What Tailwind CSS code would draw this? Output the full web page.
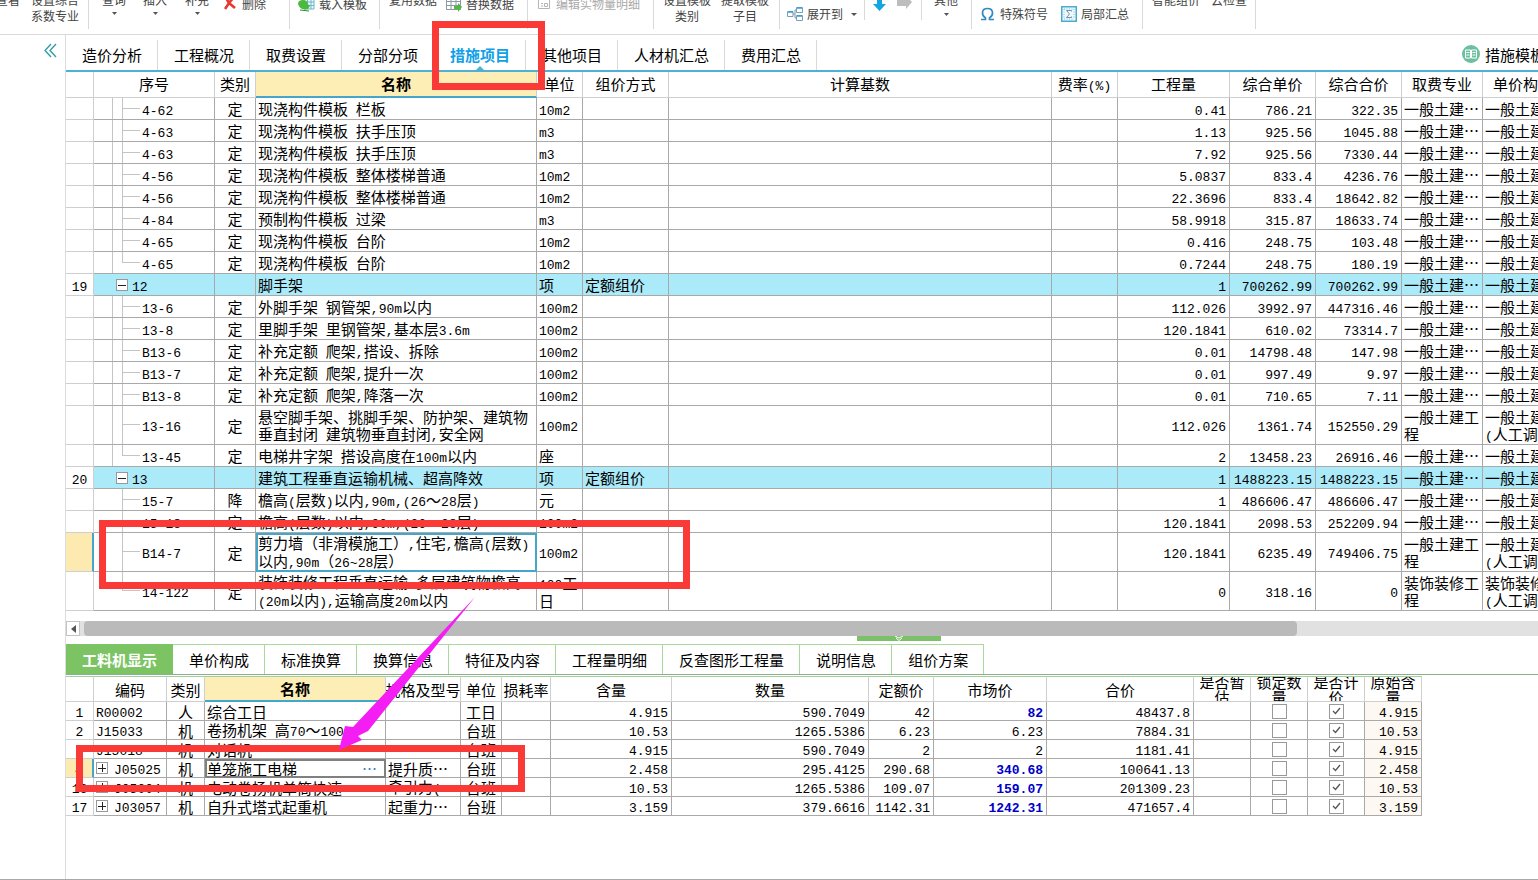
<!DOCTYPE html>
<html lang="zh-CN">
<head>
<meta charset="utf-8">
<title>措施项目</title>
<script src="https://cdn.jsdelivr.net/npm/@tailwindcss/browser@4"></script>
</head>
<body class="relative h-screen overflow-hidden bg-white font-['Noto_Sans_CJK_SC',sans-serif] text-[15px] leading-[17px] text-black">
<div class="flex h-full flex-col border-b border-[#a8a8a8]">

  <!-- Ribbon, scrolled half out of view -->
  <header class="flex h-[35px] flex-none items-start overflow-hidden border-b border-[#d9d9d9] text-xs leading-4 text-[#444] whitespace-nowrap">
    <div class="flex h-[29px] w-[89px] flex-none items-start border-r border-[#d9d9d9]">
      <button class="-mt-2 -ml-1 flex-none">查看</button>
      <button class="-mt-2 ml-[11px] flex-none text-center">设置综合<br>系数专业</button>
    </div>
    <div class="flex h-[29px] w-[201px] flex-none items-start border-r border-[#d9d9d9]">
      <button class="-mt-2 ml-[13px] flex w-6 flex-none flex-col items-center gap-1">查询<svg width="5" height="3"><path d="M0 0h5L2.500 3z" fill="#555"/></svg></button>
      <button class="-mt-2 ml-[17px] flex w-6 flex-none flex-col items-center gap-1">插入<svg width="5" height="3"><path d="M0 0h5L2.500 3z" fill="#555"/></svg></button>
      <button class="-mt-2 ml-[18px] flex w-6 flex-none flex-col items-center gap-1">补充<svg width="5" height="3"><path d="M0 0h5L2.500 3z" fill="#555"/></svg></button>
      <button class="-mt-1 ml-[15px] flex flex-none items-center gap-1.5"><svg width="12" height="14" viewBox="0 0 12 14"><path d="M2 1L5 6L1 12M10 0L5 6L11 11" fill="none" stroke="#e8382d" stroke-width="2.600" stroke-linejoin="round"/></svg>删除</button>
    </div>
    <div class="flex h-[29px] w-[90px] flex-none items-start border-r border-[#d9d9d9]">
      <button class="-mt-1 ml-2 flex flex-none items-center gap-1"><svg width="17" height="16" viewBox="0 0 17 16"><path d="M6 2h10v11H6zM6 6h10M6 9.500h10M9.500 2v11M13 2v11" fill="#eef8fb" stroke="#6db5cf"/><path d="M0 8q0-4 5-4 4 0 5 4l2 2-2 3q-8 2-10-5z" fill="#4cba3e"/><path d="M2 14l9 1" stroke="#2f8f2c"/></svg>载入模板</button>
    </div>
    <div class="flex h-[29px] w-[148px] flex-none items-start border-r border-[#d9d9d9]">
      <button class="-mt-2 ml-[9px] flex-none">复用数据</button>
      <button class="-mt-1 ml-[9px] flex flex-none items-center gap-1"><svg width="16" height="16" viewBox="0 0 16 16"><path d="M.5 1.500h14v12H.5zM.5 5.500h14M.5 9.500h14M5 1.500v12M10 1.500v12" fill="#fff" stroke="#8a9aa5"/><path d="M8 10h4V7l4 4-4 5v-3H8z" fill="#4cba3e"/></svg>替换数据</button>
    </div>
    <div class="flex h-[29px] w-[126px] flex-none items-start border-r border-[#d9d9d9] text-[#a9a9a9]">
      <button class="-mt-1 ml-[10px] flex flex-none items-center gap-1.5"><svg width="12" height="12" viewBox="0 0 12 12" fill="none" stroke="#b5b5b5"><path d="M.5 2v8.500h11V1.500H3M3 5.500h2M3 8h2M6.500 8.500v-3h3v3z"/></svg>编辑实物量明细</button>
    </div>
    <div class="flex h-[29px] w-[126px] flex-none items-start border-r border-[#d9d9d9]">
      <button class="-mt-2 ml-[9px] flex-none text-center">设置模板<br>类别</button>
      <button class="-mt-2 ml-[10px] flex-none text-center">提取模板<br>子目</button>
    </div>
    <div class="flex h-5 w-[85px] flex-none items-start border-r border-[#d9d9d9]">
      <button class="mt-1.5 ml-[7px] flex flex-none items-center gap-1"><svg width="16" height="16" viewBox="0 0 16 16" fill="#fff" stroke="#7d9db0"><path d="M6 8h2M8 4v8M8 4h2M8 12h2" fill="none"/><path d="M.5 5.500h5.500v5H.5zM9.500 1.500h6v5h-6zM9.500 9.500h6v5h-6z"/><path d="M1 6h5M10 2h5M10 10h5" stroke="#2fa4d5" stroke-width="1.500"/></svg>展开到<svg class="ml-1" width="6" height="3"><path d="M0 0h6L3 3z" fill="#555"/></svg></button>
    </div>
    <div class="flex h-5 w-[57px] flex-none items-start border-r border-[#d9d9d9]">
      <button aria-label="下移" class="ml-[8px] flex-none"><svg width="13" height="11" viewBox="0 0 13 11"><path d="M4 0h5v4h4L6.500 11 0 4h4z" fill="#12a5e4"/></svg></button>
      <button aria-label="右移" class="ml-[11px] flex-none"><svg width="15" height="10" viewBox="0 0 15 10"><path d="M0 0h9v-4l6 6-6 7V6H0z" fill="#bdbdbd"/></svg></button>
    </div>
    <div class="flex h-[29px] w-[50px] flex-none items-start border-r border-[#d9d9d9]">
      <button class="-mt-2 ml-[12px] flex w-6 flex-none flex-col items-center gap-[5px]">其他<svg width="5" height="3"><path d="M0 0h5L2.500 3z" fill="#555"/></svg></button>
    </div>
    <div class="flex h-[29px] w-[171px] flex-none items-start border-r border-[#d9d9d9]">
      <button class="mt-1.5 ml-[9px] flex flex-none items-center gap-1.5"><svg width="13" height="14" viewBox="0 0 13 14"><path d="M0 12.500h4.500V11Q1.500 9 1.500 6Q1.500 1.500 6.500 1.500T11.500 6Q11.500 9 8.500 11V12.500H13" fill="none" stroke="#3389bd" stroke-width="1.700"/></svg>特殊符号</button>
      <button class="mt-1.5 ml-[13px] flex flex-none items-center gap-1"><svg width="16" height="16" viewBox="0 0 16 16"><path d="M.75.75h14.500v14.500H.75z" fill="#eef9fc" stroke="#4aa9cf" stroke-width="1.500"/><path d="M3 3h10M3 13h10M3 3v10M13 3v10" stroke="#79c3de" stroke-dasharray="1 1.500"/><path d="M10.500 5.500V4.500H5.500L8.500 8 5.500 11.500h5v-1" fill="none" stroke="#7a8fa0"/></svg>局部汇总</button>
    </div>
    <div class="flex h-[29px] w-[113px] flex-none items-start border-r border-[#d9d9d9]">
      <button class="-mt-2 ml-[9px] flex-none">智能组价</button>
      <button class="-mt-2 ml-[11px] flex-none">云检查</button>
    </div>
  </header>

  <div class="flex min-h-0 flex-1">
    <aside class="flex w-[66px] flex-none justify-end border-r border-[#dcdcdc] pr-2 pt-2">
      <button aria-label="收起" class="self-start"><svg width="13" height="15" viewBox="0 0 13 15" fill="none" stroke="#2b9ba6" stroke-width="1.300"><path d="M7 1L1 7.500 7 14M12 1L6 7.500 12 14"/></svg></button>
    </aside>

    <main class="flex min-w-0 flex-1 flex-col">
      <nav class="flex h-[37px] flex-none items-stretch overflow-hidden border-b-2 border-[#4fb0d6] pt-[5px] whitespace-nowrap">
        <button class="flex-none border-r border-[#d9d9d9] pr-[15px] pb-0.5 pl-4">造价分析</button>
        <button class="flex-none border-r border-[#d9d9d9] pr-[15px] pb-0.5 pl-4">工程概况</button>
        <button class="flex-none border-r border-[#d9d9d9] pr-[15px] pb-0.5 pl-4">取费设置</button>
        <button class="flex-none border-r border-[#d9d9d9] pr-[15px] pb-0.5 pl-4">分部分项</button>
        <button class="relative flex-none border-r border-[#d9d9d9] pr-[15px] pb-0.5 pl-4 font-bold text-[#12a0e6]">措施项目<svg class="absolute bottom-0 left-[42px]" width="8" height="4"><path d="M0 4L4 0l4 4z" fill="#4fb0d6"/></svg></button>
        <button class="flex-none border-r border-[#d9d9d9] pr-[15px] pb-0.5 pl-4">其他项目</button>
        <button class="flex-none border-r border-[#d9d9d9] pr-[15px] pb-0.5 pl-4">人材机汇总</button>
        <button class="flex-none border-r border-[#d9d9d9] pr-[15px] pb-0.5 pl-4">费用汇总</button>
        <span class="min-w-0 flex-1"></span>
        <button class="flex w-[76px] flex-none items-center gap-[5px] overflow-hidden pb-0.5"><svg class="flex-none" width="18" height="18" viewBox="0 0 18 18"><circle cx="9" cy="9" r="9" fill="#6cc0a0"/><path d="M3.500 5h5v8h-5zM9.500 5h5v8h-5zM4.500 7.500h3M4.500 10h3M10.500 7.500h3M10.500 10h3" fill="none" stroke="#fff"/></svg>措施模板</button>
      </nav>

      <div class="flex-none overflow-hidden">
        <table class="w-[1527px] table-fixed border-separate border-spacing-0 whitespace-nowrap">
          <colgroup><col class="w-[28px]"><col class="w-[121px]"><col class="w-[41px]"><col class="w-[281px]"><col class="w-[46px]"><col class="w-[86px]"><col class="w-[383px]"><col class="w-[66px]"><col class="w-[112px]"><col class="w-[86px]"><col class="w-[86px]"><col class="w-[81px]"><col class="w-[110px]"></colgroup>
          <thead><tr id="mainHead"></tr></thead>
          <tbody id="mainBody"></tbody>
        </table>
      </div>

      <!-- Horizontal scrollbar -->
      <div class="mt-2.5 flex h-[15px] flex-none items-stretch bg-[#e1e1e1]">
        <button aria-label="向左滚动" class="grid w-[14px] place-items-center border border-[#c4c4c4] bg-white"><svg width="5" height="8"><path d="M5 0v8L0 4z" fill="#555"/></svg></button>
        <div class="ml-1 w-[1213px] rounded-sm bg-[#bababa]"></div>
      </div>
      <div class="flex h-2 flex-none pl-[791px]">
        <button aria-label="折叠" class="grid h-[5px] w-[84px] place-items-center bg-[#7cc06a]"><svg width="8" height="5" fill="none" stroke="#fff"><path d="M0 0l4 2 4-2M1 2l3 2.500L7 2"/></svg></button>
      </div>

      <nav class="flex h-[31px] flex-none items-stretch border-b border-[#86b583] whitespace-nowrap">
        <button class="flex-none bg-[#7cc363] px-4 font-bold text-white">工料机显示</button>
        <button class="flex-none border-t border-r border-[#a9d99b] pr-[15px] pl-4">单价构成</button>
        <button class="flex-none border-t border-r border-[#a9d99b] pr-[15px] pl-4">标准换算</button>
        <button class="flex-none border-t border-r border-[#a9d99b] pr-[15px] pl-4">换算信息</button>
        <button class="flex-none border-t border-r border-[#a9d99b] pr-[15px] pl-4">特征及内容</button>
        <button class="flex-none border-t border-r border-[#a9d99b] pr-[15px] pl-4">工程量明细</button>
        <button class="flex-none border-t border-r border-[#a9d99b] pr-[15px] pl-4">反查图形工程量</button>
        <button class="flex-none border-t border-r border-[#a9d99b] pr-[15px] pl-4">说明信息</button>
        <button class="flex-none border-t border-r border-[#a9d99b] pr-[15px] pl-4">组价方案</button>
      </nav>

      <div class="min-h-0 flex-1 overflow-hidden pt-px">
        <table class="w-[1356px] table-fixed border-separate border-spacing-0 whitespace-nowrap">
          <colgroup><col class="w-[28px]"><col class="w-[73px]"><col class="w-[38px]"><col class="w-[181px]"><col class="w-[75px]"><col class="w-[41px]"><col class="w-[49px]"><col class="w-[121px]"><col class="w-[197px]"><col class="w-[65px]"><col class="w-[113px]"><col class="w-[147px]"><col class="w-[57px]"><col class="w-[57px]"><col class="w-[57px]"><col class="w-[57px]"></colgroup>
          <thead><tr id="subHead"></tr></thead>
          <tbody id="subBody"></tbody>
        </table>
      </div>
    </main>
  </div>
</div>

<!-- Annotations -->
<div class="pointer-events-none absolute top-[21px] left-[432px] h-[69px] w-[113px] border-[7px] border-[#f93a37]"></div>
<div class="pointer-events-none absolute top-[520px] left-[99px] h-[69px] w-[591px] border-[7px] border-[#f93a37]"></div>
<div class="pointer-events-none absolute top-[745px] left-[76px] h-[47px] w-[449px] border-[7px] border-[#f93a37]"></div>
<svg class="pointer-events-none absolute top-[595px] left-[335px]" width="145" height="158" viewBox="335 595 145 158"><path d="M475 597L353 727L345 726L339 750L362 740L358 736L368 731Z" fill="#f41df4"/></svg>

<script>
// Latin runs use a half-width monospace beside the full-width characters
const t = s => s.split('<br>').map(l => l.replace(/[ -~]+/g, m => `<span class="font-['Liberation_Mono',monospace] text-[13px] leading-none whitespace-pre">${m}</span>`)).join('<br>');
const L = 'border-r border-b border-[#a9a9a9] p-0 pl-0.5 text-left font-normal';
const C = 'border-r border-b border-[#a9a9a9] p-0 text-center font-normal';
const R = 'border-r border-b border-[#a9a9a9] p-0 pr-[3px] text-right font-normal';
const G = 'border-r border-b border-[#cfcfcf] p-0 text-center';

document.getElementById('mainHead').innerHTML =
  ['', '序号', '类别', '名称', '单位', '组价方式', '计算基数', '费率(%)', '工程量', '综合单价', '综合合价', '取费专业', '单价构成文件'].map((h, i) =>
    i === 3 ? `<th class="h-[26px] border-r border-b-2 border-r-[#cfcfcf] border-b-[#45a5cb] bg-[#fdeeb5] p-0 pb-px font-bold">${h}</th>`
            : `<th class="h-[26px] overflow-hidden border-r border-b border-[#cfcfcf] p-0 pb-0.5 font-normal ${i === 12 ? 'pl-2.5 text-left' : ''}">${t(h)}</th>`).join('');

const Y = '一般土建⋯', Y2 = '一般土建工<br>程', Y3 = '一般土建工程<br>(人工调整)';
// no, code, type, name, unit, pricing, qty, price, total, specialty, file, flags
const rows = [
  ['', '4-62', '定', '现浇构件模板 栏板', '10m2', '', '0.41', '786.21', '322.35', Y, Y, 'a'],
  ['', '4-63', '定', '现浇构件模板 扶手压顶', 'm3', '', '1.13', '925.56', '1045.88', Y, Y, 'a'],
  ['', '4-63', '定', '现浇构件模板 扶手压顶', 'm3', '', '7.92', '925.56', '7330.44', Y, Y, 'a'],
  ['', '4-56', '定', '现浇构件模板 整体楼梯普通', '10m2', '', '5.0837', '833.4', '4236.76', Y, Y, 'a'],
  ['', '4-56', '定', '现浇构件模板 整体楼梯普通', '10m2', '', '22.3696', '833.4', '18642.82', Y, Y, 'a'],
  ['', '4-84', '定', '预制构件模板 过梁', 'm3', '', '58.9918', '315.87', '18633.74', Y, Y, 'a'],
  ['', '4-65', '定', '现浇构件模板 台阶', '10m2', '', '0.416', '248.75', '103.48', Y, Y, 'a'],
  ['', '4-65', '定', '现浇构件模板 台阶', '10m2', '', '0.7244', '248.75', '180.19', Y, Y, 'ae'],
  ['19', '12', '', '脚手架', '项', '定额组价', '1', '700262.99', '700262.99', Y, Y, 'g'],
  ['', '13-6', '定', '外脚手架 钢管架,90m以内', '100m2', '', '112.026', '3992.97', '447316.46', Y, Y, 'a'],
  ['', '13-8', '定', '里脚手架 里钢管架,基本层3.6m', '100m2', '', '120.1841', '610.02', '73314.7', Y, Y, 'a'],
  ['', 'B13-6', '定', '补充定额 爬架,搭设、拆除', '100m2', '', '0.01', '14798.48', '147.98', Y, Y, 'a'],
  ['', 'B13-7', '定', '补充定额 爬架,提升一次', '100m2', '', '0.01', '997.49', '9.97', Y, Y, 'a'],
  ['', 'B13-8', '定', '补充定额 爬架,降落一次', '100m2', '', '0.01', '710.65', '7.11', Y, Y, 'a'],
  ['', '13-16', '定', '悬空脚手架、挑脚手架、防护架、建筑物<br>垂直封闭 建筑物垂直封闭,安全网', '100m2', '', '112.026', '1361.74', '152550.29', Y2, Y3, 'at'],
  ['', '13-45', '定', '电梯井字架 搭设高度在100m以内', '座', '', '2', '13458.23', '26916.46', Y, Y, 'ae'],
  ['20', '13', '', '建筑工程垂直运输机械、超高降效', '项', '定额组价', '1', '1488223.15', '1488223.15', Y, Y, 'g'],
  ['', '15-7', '降', '檐高(层数)以内,90m,(26～28层)', '元', '', '1', '486606.47', '486606.47', Y, Y, ''],
  ['', '15-18', '定', '檐高(层数)以内,90m,(26～28层)', '100m2', '', '120.1841', '2098.53', '252209.94', Y, Y, ''],
  ['', 'B14-7', '定', '剪力墙（非滑模施工）,住宅,檐高(层数)<br>以内,90m（26~28层）', '100m2', '', '120.1841', '6235.49', '749406.75', Y2, Y3, 'ts'],
  ['', '14-122', '定', '装饰装修工程垂直运输 多层建筑物檐高<br>(20m以内),运输高度20m以内', '100工<br>日', '', '0', '318.16', '0', '装饰装修工<br>程', '装饰装修工程<br>(人工调整)', 'te'],
];
document.getElementById('mainBody').innerHTML = rows.map(r => {
  const f = r[11], tall = f.includes('t'), sel = f.includes('s');
  const tree = f.includes('g')
    ? `<div class="flex h-[21px] items-center pl-[22px]"><button aria-label="收起" class="mr-1 grid h-3 w-3 flex-none place-items-center border border-[#999] bg-white"><svg width="8" height="8" stroke="#222"><path d="M0 4.500h8"/></svg></button><span>${t(r[1])}</span></div>`
    : `<div class="flex items-center ${tall ? 'h-[38px]' : 'h-[21px]'}"><span class="w-[19px] flex-none self-stretch border-r ${f.includes('a') ? 'border-[#c4c4c4]' : 'border-transparent'}"></span><span class="w-[9px] flex-none"></span><span class="flex w-[18px] flex-none flex-col self-stretch"><span class="border-b border-l border-[#c4c4c4] ${tall ? 'h-[19px]' : 'h-[11px]'}"></span>${f.includes('e') ? '' : '<span class="flex-1 border-l border-[#c4c4c4]"></span>'}</span><span class="pl-0.5">${t(r[1])}</span></div>`;
  return `<tr class="${tall ? 'h-[39px]' : 'h-[22px]'} ${f.includes('g') ? 'bg-[#aaeaf9]' : ''}">
    <td class="${sel ? 'border-r-2 border-b border-r-[#45a5cb] border-b-[#cfcfcf] bg-[#fdeab0] p-0' : G + ' bg-white'}">${t(r[0])}</td>
    <td class="${L.replace('pl-0.5', 'pl-0')}">${tree}</td><td class="${C}">${r[2]}</td>
    <td class="${sel ? L + ' outline-2 -outline-offset-2 outline-[#45a5cb]' : L}">${t(r[3])}</td><td class="${L}">${t(r[4])}</td><td class="${L}">${r[5]}</td>
    <td class="${L}"></td><td class="${L}"></td><td class="${R}">${t(r[6])}</td><td class="${R}">${t(r[7])}</td><td class="${R}">${t(r[8])}</td><td class="${L}">${t(r[9])}</td><td class="${L}">${t(r[10])}</td></tr>`;
}).join('');

document.getElementById('subHead').innerHTML =
  ['', '编码', '类别', '名称', '规格及型号', '单位', '损耗率', '含量', '数量', '定额价', '市场价', '合价', '是否暂<br>估', '锁定数<br>量', '是否计<br>价', '原始含<br>量'].map((h, i) =>
    i === 3 ? `<th class="h-[26px] border-t border-r border-b-2 border-t-[#a9c9a6] border-r-[#cfcfcf] border-b-[#45a5cb] bg-[#fdeeb5] p-0 font-bold">${h}</th>`
            : `<th class="h-[26px] border-t border-r border-b border-[#cfcfcf] border-t-[#a9c9a6] p-0 font-normal"><div class="flex h-6 items-center justify-center overflow-hidden leading-[15px]"><span>${h}</span></div></th>`).join('');

const sub = [
  ['1', 'R00002', '人', '综合工日', '', '工日', '4.915', '590.7049', '42', '82', '48437.8', 'b'],
  ['2', 'J15033', '机', '卷扬机架 高70～100m', '', '台班', '10.53', '1265.5386', '6.23', '6.23', '7884.31', ''],
  ['3', 'J15018', '机', '对话机', '', '台班', '4.915', '590.7049', '2', '2', '1181.41', ''],
  ['4', 'J05025', '机', '单笼施工电梯', '提升质⋯', '台班', '2.458', '295.4125', '290.68', '340.68', '100641.13', 'bxs'],
  ['16', 'J05004', '机', '电动卷扬机单筒快速', '牵引力(', '台班', '10.53', '1265.5386', '109.07', '159.07', '201309.23', 'bx'],
  ['17', 'J03057', '机', '自升式塔式起重机', '起重力⋯', '台班', '3.159', '379.6616', '1142.31', '1242.31', '471657.4', 'bx'],
];
const box = (on, label) => `<div class="grid place-items-center"><input type="checkbox" aria-label="${label}" ${on ? 'checked' : ''} class="col-start-1 row-start-1 h-[15px] w-[15px] appearance-none border border-[#999] bg-white">${on ? '<svg class="pointer-events-none col-start-1 row-start-1" width="9" height="8" fill="none" stroke="#555" stroke-width="1.300"><path d="M1 4l2.500 2.500L8 1"/></svg>' : ''}</div>`;
document.getElementById('subBody').innerHTML = sub.map(r => {
  const f = r[11], sel = f.includes('s');
  const plus = f.includes('x') ? '<button aria-label="展开" class="mr-1.5 grid h-3 w-3 flex-none place-items-center border border-[#999] bg-white"><svg width="8" height="8" stroke="#222"><path d="M0 4.500h8M4.500 0v8"/></svg></button>' : '';
  const name = sel ? `<div class="flex justify-between pr-2"><span>${r[3]}</span><button aria-label="更多" class="text-[#3f7fbf]">⋯</button></div>` : t(r[3]);
  return `<tr class="h-[19px]">
    <td class="${sel ? 'border-r-2 border-b border-r-[#45a5cb] border-b-[#cfcfcf] bg-[#fdeab0] p-0 text-center' : G}">${t(r[0])}</td>
    <td class="${L}"><div class="flex h-[18px] items-center">${plus}<span>${t(r[1])}</span></div></td><td class="${C}">${r[2]}</td>
    <td class="${sel ? L + ' outline-2 -outline-offset-2 outline-[#808080]' : L}">${name}</td><td class="${L}">${t(r[4])}</td><td class="${C}">${r[5]}</td><td class="${L}"></td>
    <td class="${R}">${t(r[6])}</td><td class="${R}">${t(r[7])}</td><td class="${R}">${t(r[8])}</td>
    <td class="${R}">${f.includes('b') ? `<b class="text-[#0000c8]">${t(r[9])}</b>` : t(r[9])}</td><td class="${R}">${t(r[10])}</td>
    <td class="${C}"></td><td class="${C}">${box(false, '锁定数量')}</td><td class="${C}">${box(true, '是否计价')}</td><td class="${R} bg-[#fdf9f2]">${t(r[6])}</td></tr>`;
}).join('');
</script>
</body>
</html>
